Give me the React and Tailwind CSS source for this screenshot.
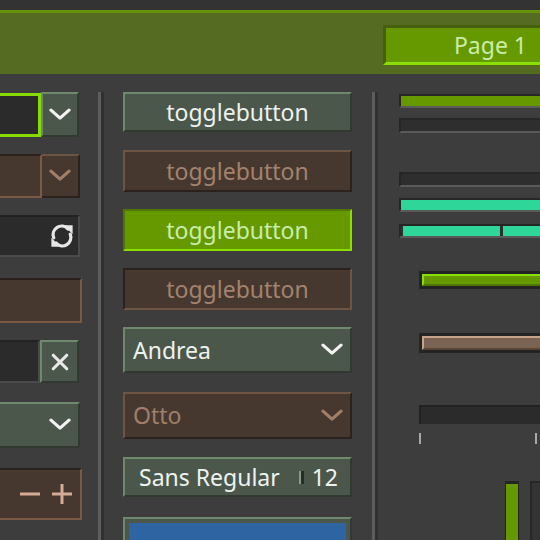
import React from "react";

// Bevel styles shared by the themed widgets
const raisedGreen =
  "bg-[#4b574b] border-2 border-t-[#6f896f] border-l-[#6f896f] border-b-[#313931] border-r-[#313931]";
const raisedBrown =
  "bg-[#46382f] border-2 border-t-[#6e5443] border-l-[#6e5443] border-b-[#2b221d] border-r-[#2b221d]";
const sunkenBrown =
  "bg-[#46382f] border-2 border-t-[#2b221d] border-l-[#2b221d] border-b-[#7a5a45] border-r-[#7a5a45]";
const sunkenDark =
  "bg-[#2b2b2b] border-2 border-t-[#232323] border-l-[#232323] border-b-[#4a4a4a] border-r-[#4a4a4a]";

function Chevron({ color = "#f2f2f2", size = 22 }) {
  return (
    <svg width={size} height={size * 0.6} viewBox="0 0 22 13" fill="none">
      <polyline
        points="2,2 11,10 20,2"
        stroke={color}
        strokeWidth="3.2"
        strokeLinecap="round"
        strokeLinejoin="round"
      />
    </svg>
  );
}

function RefreshIcon() {
  return (
    <svg width="26" height="26" viewBox="0 0 22 22" fill="none">
      <path
        d="M4 12.5 A7.2 7.2 0 0 1 16 5"
        stroke="#e6e6e6"
        strokeWidth="2.8"
        strokeLinecap="round"
      />
      <polygon points="12.5,2 20,2 20,9.5" fill="#e6e6e6" />
      <path
        d="M18 9.5 A7.2 7.2 0 0 1 6 17"
        stroke="#e6e6e6"
        strokeWidth="2.8"
        strokeLinecap="round"
      />
      <polygon points="9.5,20 2,20 2,12.5" fill="#e6e6e6" />
    </svg>
  );
}

function CloseIcon() {
  return (
    <svg width="18" height="18" viewBox="0 0 16 16">
      <path d="M2 2 L14 14 M14 2 L2 14" stroke="#e8e8e8" strokeWidth="2.8" strokeLinecap="round" />
    </svg>
  );
}

function Separator() {
  return (
    <div className="flex self-stretch shrink-0">
      <div className="w-[3px] bg-[#5d5d5d]" />
      <div className="w-[3px] bg-[#303030]" />
    </div>
  );
}

function Trough({ className = "", children }) {
  return (
    <div
      className={
        "bg-[#2e2e2e] border-t-2 border-l-2 border-b-2 border-t-[#262626] border-l-[#262626] border-b-[#5a5a5a] " +
        className
      }
    >
      {children}
    </div>
  );
}

function LeftColumn() {
  return (
    <div className="w-[82px] shrink-0 flex flex-col">
      {/* focused entry with combo button */}
      <div className="flex h-[45px]">
        <div className="w-[41px] h-[44px] mt-[1px] bg-[#2b2b2b] border-[3px] border-l-0 border-[#86dc00]" />
        <div className={"w-[38px] flex items-center justify-center " + raisedGreen}>
          <Chevron />
        </div>
      </div>
      {/* insensitive combo entry */}
      <div className="flex h-[44px] mt-[17px]">
        <div className={"w-[42px] border-l-0 " + sunkenBrown} />
        <div className={"w-[38px] flex items-center justify-center border-l-0 " + raisedBrown}>
          <Chevron color="#a27e67" />
        </div>
      </div>
      {/* entry with refresh icon */}
      <div className={"h-[42px] mt-[17px] w-[80px] border-l-0 flex items-center justify-end pr-[3px] " + sunkenDark}>
        <RefreshIcon />
      </div>
      {/* insensitive entry */}
      <div className={"h-[45px] mt-[21px] w-[82px] border-l-0 " + sunkenBrown} />
      {/* entry with clear button */}
      <div className="flex h-[43px] mt-[17px]">
        <div className={"w-[40px] border-l-0 " + sunkenDark} />
        <div className={"w-[39px] flex items-center justify-center " + raisedGreen}>
          <CloseIcon />
        </div>
      </div>
      {/* combo box */}
      <div className={"h-[46px] mt-[19px] w-[80px] border-l-0 flex items-center justify-end pr-[7px] " + raisedGreen}>
        <Chevron />
      </div>
      {/* insensitive spin button */}
      <div className={"h-[52px] mt-[20px] w-[82px] border-l-0 flex items-center justify-end gap-[10px] pr-[7px] " + sunkenBrown}>
        <svg width="22" height="22" viewBox="0 0 22 22">
          <path d="M1 11 H21" stroke="#d4ac94" strokeWidth="3" />
        </svg>
        <svg width="22" height="22" viewBox="0 0 22 22">
          <path d="M1 11 H21 M11 1 V21" stroke="#d4ac94" strokeWidth="3" />
        </svg>
      </div>
    </div>
  );
}

function MiddleColumn() {
  const label = "text-[23px] leading-none";
  return (
    <div className="w-[229px] shrink-0 flex flex-col">
      <div className={"h-[40px] flex items-center justify-center text-[#eef2ee] " + label + " " + raisedGreen}>
        togglebutton
      </div>
      <div className={"h-[42px] mt-[18px] flex items-center justify-center text-[#a3836e] " + label + " " + raisedBrown}>
        togglebutton
      </div>
      <div
        className={
          "h-[42px] mt-[17px] flex items-center justify-center text-[#c8eeaa] bg-[#669900] border-2 border-t-[#4f7600] border-l-[#4f7600] border-b-[#8ade00] border-r-[#8ade00] " +
          label
        }
      >
        togglebutton
      </div>
      <div className={"h-[42px] mt-[17px] flex items-center justify-center text-[#a3836e] " + label + " " + "bg-[#46382f] border-2 border-t-[#2b221d] border-l-[#2b221d] border-b-[#6e5443] border-r-[#6e5443]"}>
        togglebutton
      </div>
      <div className={"h-[46px] mt-[17px] flex items-center justify-between pl-[8px] pr-[7px] text-[#eef2ee] " + label + " " + raisedGreen}>
        <span>Andrea</span>
        <Chevron />
      </div>
      <div className={"h-[47px] mt-[19px] flex items-center justify-between pl-[8px] pr-[7px] text-[#9f7f6a] " + label + " " + raisedBrown}>
        <span>Otto</span>
        <Chevron color="#a27e67" />
      </div>
      <div className={"h-[40px] mt-[18px] flex items-center pl-[14px] pr-[12px] text-[#eef2ee] " + label + " " + raisedGreen}>
        <span>Sans Regular</span>
        <span className="ml-auto w-[5px] h-[13px] border-l-2 border-l-[#8a9a84] bg-[#262c26]" />
        <span className="ml-[8px]">12</span>
      </div>
      <div className={"h-[40px] mt-[20px] p-[4px] " + raisedGreen}>
        <div className="h-full bg-[#2f64a3]" />
      </div>
    </div>
  );
}

function RightColumn() {
  return (
    <div className="w-[200px] shrink-0 flex flex-col">
      <Trough className="h-[14px] mt-[2px] flex">
        <div className="flex-1 bg-[#669900]" />
      </Trough>
      <Trough className="h-[15px] mt-[10px]" />
      <Trough className="h-[15px] mt-[39px]" />
      <Trough className="h-[14px] mt-[11px] flex">
        <div className="flex-1 bg-[#2ed69a]" />
      </Trough>
      <Trough className="h-[14px] mt-[12px] flex pl-[2px] gap-[3px]">
        <div className="w-[97px] bg-[#2ed69a]" />
        <div className="flex-1 bg-[#2ed69a]" />
      </Trough>
      <div className="ml-[20px] flex flex-col">
        {/* scales */}
        <div className="h-[18px] mt-[33px] bg-[#242424] pt-[3px] pl-[3px] pb-[3px]">
          <div className="h-full bg-[#669900] border-t-2 border-l-2 border-b-2 border-t-[#8ade00] border-l-[#8ade00] border-b-[#4f7600]" />
        </div>
        <div className="h-[20px] mt-[44px] bg-[#242424] pt-[3px] pl-[3px] pb-[3px]">
          <div className="h-full bg-[#7b6354] border-t-2 border-l-2 border-b-2 border-t-[#c7a28c] border-l-[#c7a28c] border-b-[#594538]" />
        </div>
        <div className="h-[19px] mt-[52px] bg-[#2b2b2b] border-t-2 border-l-2 border-[#222222]" />
        <div className="flex h-[11px] mt-[9px]">
          <div className="w-[2px] bg-[#a8a8a8]" />
          <div className="w-[2px] bg-[#a8a8a8] ml-[114px]" />
        </div>
        {/* vertical bars */}
        <div className="flex mt-[37px] ml-[86px] gap-[11px]">
          <div className="w-[14px] h-[80px] bg-[#242424] pt-[3px] px-[1px]">
            <div className="h-full bg-[#669900]" />
          </div>
          <div className="w-[14px] h-[80px] bg-[#333333] border-t-2 border-l-2 border-[#262626]" />
        </div>
      </div>
    </div>
  );
}

export default function App() {
  return (
    <div className="w-[540px] h-[540px] overflow-hidden bg-[#3d3d3d] font-['Noto_Sans',sans-serif] select-none">
      <div className="h-[10px] bg-[#333333]" />
      <div className="h-[64px] bg-[#556b21] border-t-[3px] border-t-[#66920c] flex justify-end items-start pt-[12px]">
        <div className="w-[157px] h-[40px] bg-[#669900] border-t-[3px] border-l-[3px] border-b-[3px] border-t-[#46600e] border-l-[#46600e] border-b-[#8ade00] flex items-center justify-end pr-[13px] text-[#c9eea6] text-[23px]">
          Page 1
        </div>
      </div>
      <div className="flex h-[466px] pt-[18px]">
        <LeftColumn />
        <div className="ml-[16px] flex">
          <Separator />
        </div>
        <div className="ml-[19px]">
          <MiddleColumn />
        </div>
        <div className="ml-[20px] flex">
          <Separator />
        </div>
        <div className="ml-[21px]">
          <RightColumn />
        </div>
      </div>
    </div>
  );
}
